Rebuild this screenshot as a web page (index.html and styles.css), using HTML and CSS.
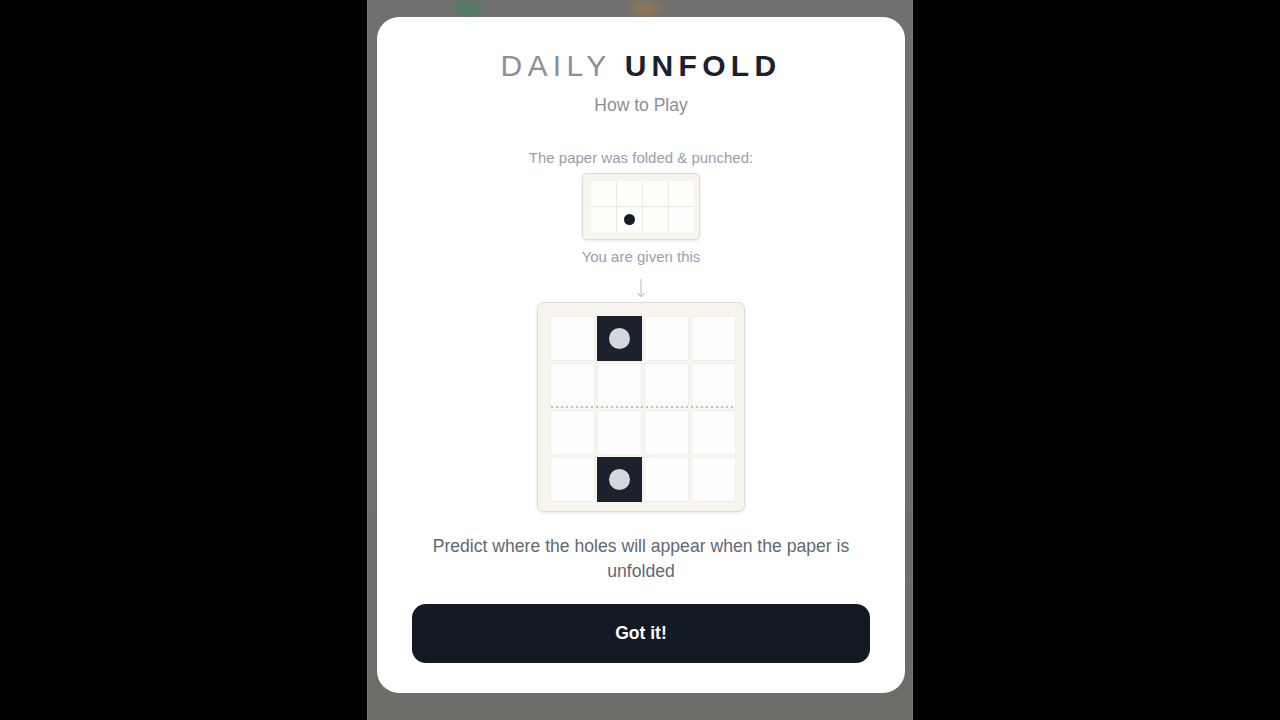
FILE: index.html
```html
<!DOCTYPE html>
<html>
<head>
<meta charset="utf-8">
<link rel="stylesheet" href="styles.css">
</head>
<body>
<div class="stage">
  <div class="modal">
    <h1 class="title"><span class="light">DAILY</span> <span class="bold">UNFOLD</span></h1>
    <div class="subtitle">How to Play</div>
    <div class="caption first">The paper was folded &amp; punched:</div>
    <div class="paper small">
      <div class="sgrid">
        <div class="scell"></div><div class="scell"></div><div class="scell"></div><div class="scell"></div>
        <div class="scell"></div><div class="scell"><span class="sdot"></span></div><div class="scell"></div><div class="scell"></div>
      </div>
    </div>
    <div class="caption given">You are given this</div>
    <svg class="arrow" width="12" height="20" viewBox="0 0 12 20">
      <path d="M6 1.5 V18.5 M3 15.5 L6 18.5 L9 15.5" fill="none" stroke="#c3c5c9" stroke-width="1.2" stroke-linecap="round" stroke-linejoin="round"/>
    </svg>
    <div class="paper big">
      <div class="bgrid">
        <div class="bcell"></div><div class="bcell dark"><span class="hole"></span></div><div class="bcell"></div><div class="bcell"></div>
        <div class="bcell"></div><div class="bcell"></div><div class="bcell"></div><div class="bcell"></div>
        <div class="bcell"></div><div class="bcell"></div><div class="bcell"></div><div class="bcell"></div>
        <div class="bcell"></div><div class="bcell dark"><span class="hole"></span></div><div class="bcell"></div><div class="bcell"></div>
        <div class="fold"></div>
      </div>
    </div>
    <p class="predict">Predict where the holes will appear when the paper is unfolded</p>
    <button class="btn">Got it!</button>
  </div>
</div>
</body>
</html>
```

FILE: styles.css
```css
* { box-sizing: border-box; }
html, body { margin: 0; padding: 0; }
body {
  background: #000;
  font-family: "Liberation Sans", Arial, sans-serif;
  width: 1280px;
  height: 720px;
  overflow: hidden;
}
.stage {
  width: 546px;
  height: 720px;
  margin: 0 auto;
  padding-top: 17px;
  background:
    radial-gradient(ellipse 22px 12px at 100px 8px, rgba(40,140,80,0.55), rgba(40,140,80,0) 100%),
    radial-gradient(ellipse 22px 12px at 278px 8px, rgba(190,130,50,0.45), rgba(190,130,50,0) 100%),
    linear-gradient(#707070, #6c6c69);
  border-left: 1px solid #7c7c79;
  border-right: 1px solid #7c7c79;
}
.modal {
  width: 528px;
  margin: 0 0 0 9px;
  background: #fff;
  border-radius: 22px;
  padding: 31px 35px 30px;
  display: flex;
  flex-direction: column;
  align-items: center;
}
.title {
  margin: 0;
  font-size: 30px;
  line-height: 36px;
  letter-spacing: 5.3px;
  font-weight: 400;
  white-space: nowrap;
}
.title .light { color: #8b9099; }
.title .bold { color: #1a202c; font-weight: 700; }
.subtitle {
  margin-top: 9px;
  font-size: 17.5px;
  line-height: 24px;
  color: #8b9098;
}
.caption {
  font-size: 15px;
  line-height: 20px;
  color: #9a9fa7;
}
.caption.first { margin-top: 31px; }
.caption.given { margin-top: 7px; }
.arrow {
  display: block;
  margin-top: 11px;
}
.paper {
  background: #f7f5ee;
  border: 1px solid #dedcd5;
  box-shadow: 0 1px 3px rgba(0,0,0,0.10);
}
.paper.small {
  margin-top: 5px;
  width: 118px;
  height: 67px;
  border-radius: 5px;
  padding: 7px 7px 6px 8px;
}
.sgrid {
  display: grid;
  grid-template-columns: repeat(4, 25px);
  grid-template-rows: repeat(2, 25px);
  gap: 1px;
  background: #ebe9e2;
  width: 103px;
}
.scell {
  background: #fdfdfc;
  display: flex;
  align-items: center;
  justify-content: center;
}
.sdot {
  width: 11px;
  height: 11px;
  border-radius: 50%;
  background: #161c27;
}
.paper.big {
  margin-top: 4px;
  width: 208px;
  height: 210px;
  border-radius: 7px;
  padding: 13px 9px 10px 12px;
}
.bgrid {
  position: relative;
  display: grid;
  grid-template-columns: repeat(4, 45px);
  grid-template-rows: repeat(4, 45px);
  gap: 2px;
}
.bcell {
  background: #fdfdfd;
  border: 1px solid #f1efe9;
  display: flex;
  align-items: center;
  justify-content: center;
}
.bcell.dark {
  background: #1c222d;
  border-color: #1c222d;
}
.hole {
  width: 21px;
  height: 21px;
  border-radius: 50%;
  background: #d4d7db;
}
.fold {
  position: absolute;
  left: 1px;
  right: 0;
  top: 90px;
  height: 2px;
  background-image: linear-gradient(to right, #c2c2c2 2px, transparent 2px);
  background-size: 5px 2px;
  background-repeat: repeat-x;
}
.predict {
  margin: 22px 0 0;
  font-size: 17.6px;
  line-height: 25px;
  color: #626872;
  text-align: center;
}
.btn {
  margin-top: 20px;
  width: 458px;
  height: 59px;
  border: none;
  border-radius: 14px;
  background: #131922;
  color: #fff;
  font-family: "Liberation Sans", Arial, sans-serif;
  font-size: 17.5px;
  font-weight: 700;
}
```
